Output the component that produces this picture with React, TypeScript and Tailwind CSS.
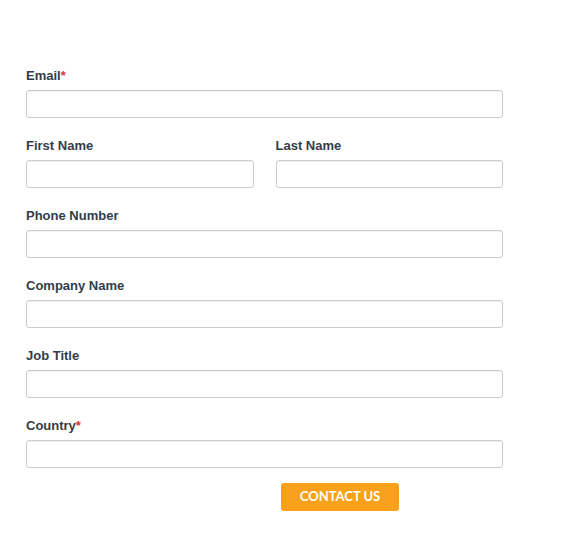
import React from 'react';

const Field = ({ label, required }: { label: string; required?: boolean }) => (
  <div className="flex flex-col">
    <label className="h-4 text-[13px] leading-4 font-bold text-[#333d47] mb-[6px]">
      {label}
      {required && <span className="text-[#e4312b]">*</span>}
    </label>
    <input
      type="text"
      className="h-[28px] w-full rounded-[3px] border border-[#cccccc] bg-white shadow-[inset_0_1px_1px_rgba(0,0,0,0.06)] outline-none"
    />
  </div>
);

export default function App() {
  return (
    <div className="min-h-[543px] bg-white pt-[68px] pl-[26px]" style={{ fontFamily: '"Liberation Sans", Arial, sans-serif' }}>
      <form className="flex w-[477px] flex-col gap-[20px]">
        <Field label="Email" required />
        <div className="grid grid-cols-2 gap-[22px]">
          <Field label="First Name" />
          <Field label="Last Name" />
        </div>
        <Field label="Phone Number" />
        <Field label="Company Name" />
        <Field label="Job Title" />
        <Field label="Country" required />
      </form>
      <button
        type="button"
        className="mt-[15px] ml-[255px] h-[28px] w-[118px] rounded-[3px] bg-[#f9a11b] text-[13px] font-bold text-white"
        style={{ fontFamily: 'Lato, "Open Sans", sans-serif' }}
      >
        CONTACT US
      </button>
    </div>
  );
}
